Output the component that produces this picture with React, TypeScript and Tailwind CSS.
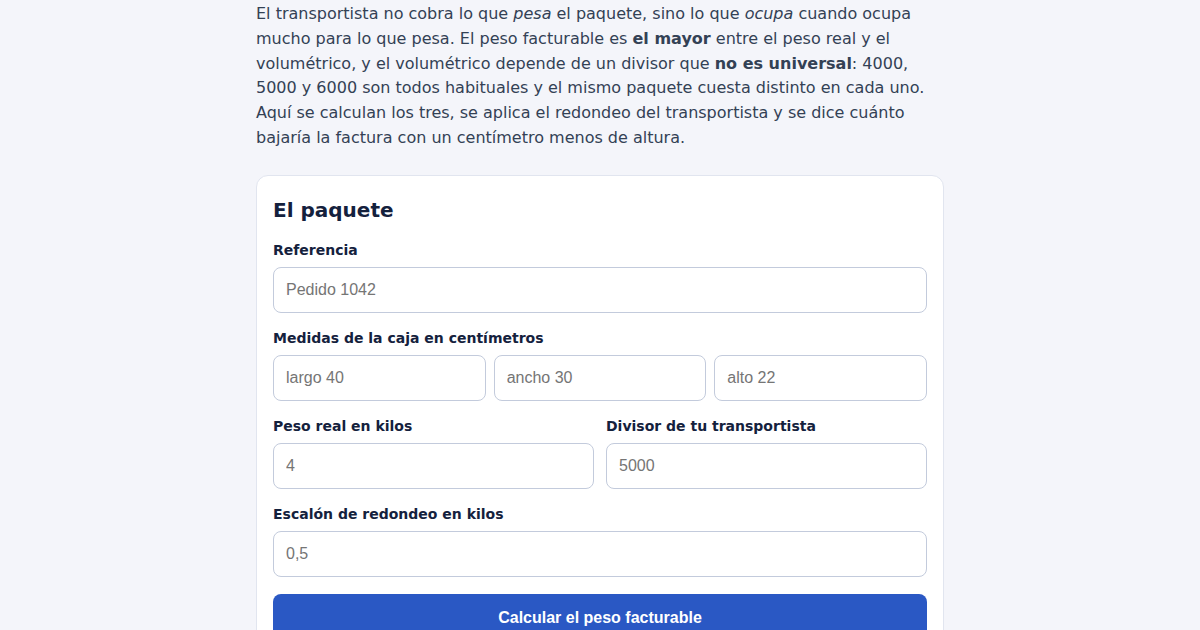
import { useState } from "react";

/**
 * Calculadora de peso facturable: intro text plus the package form card.
 * Only the top of the page is visible in the frame, so the form is static.
 */

const fieldLabel = "mb-[7px] block text-sm font-bold leading-5 text-[#14213d]";
const fieldInput =
  "h-[46px] w-full rounded-lg border border-[#c3cbdc] bg-white px-3 font-['Liberation_Sans',Arial,sans-serif] text-base text-[#1f2937] outline-none placeholder:text-[#757575] focus:border-[#2a58c4]";

function Field({ label, placeholder }: { label: string; placeholder: string }) {
  const [value, setValue] = useState("");
  return (
    <div>
      <label className={fieldLabel}>{label}</label>
      <input
        className={fieldInput}
        placeholder={placeholder}
        value={value}
        onChange={(e) => setValue(e.target.value)}
      />
    </div>
  );
}

export default function App() {
  return (
    <main className="min-h-screen bg-[#f4f5fa] pt-[2px] font-['DejaVu_Sans',sans-serif]">
      <div className="mx-auto w-[688px]">
        <p className="text-base leading-[1.55] text-[#334155]">
          El transportista no cobra lo que <em>pesa</em> el paquete, sino lo que <em>ocupa</em> cuando
          ocupa mucho para lo que pesa. El peso facturable es <strong>el mayor</strong> entre el peso
          real y el volumétrico, y el volumétrico depende de un divisor que{" "}
          <strong>no es universal</strong>: 4000, 5000 y 6000 son todos habituales y el mismo paquete
          cuesta distinto en cada uno. Aquí se calculan los tres, se aplica el redondeo del
          transportista y se dice cuánto bajaría la factura con un centímetro menos de altura.
        </p>

        <section className="mt-6 rounded-xl border border-[#e1e5ef] bg-white px-4 pt-5 pb-5">
          <h2 className="mb-4 text-xl font-bold leading-7 text-[#14213d]">El paquete</h2>

          <div className="flex flex-col gap-[15px]">
            <Field label="Referencia" placeholder="Pedido 1042" />

            <div>
              <label className={fieldLabel}>Medidas de la caja en centímetros</label>
              <div className="grid grid-cols-3 gap-2">
                <input className={fieldInput} placeholder="largo 40" />
                <input className={fieldInput} placeholder="ancho 30" />
                <input className={fieldInput} placeholder="alto 22" />
              </div>
            </div>

            <div className="grid grid-cols-2 gap-3">
              <Field label="Peso real en kilos" placeholder="4" />
              <Field label="Divisor de tu transportista" placeholder="5000" />
            </div>

            <Field label="Escalón de redondeo en kilos" placeholder="0,5" />
          </div>

          <button
            type="button"
            className="mt-[17px] h-12 w-full rounded-lg bg-[#2a58c4] font-['Liberation_Sans',Arial,sans-serif] text-base font-bold text-white hover:bg-[#234bb0]"
          >
            Calcular el peso facturable
          </button>
        </section>
      </div>
    </main>
  );
}
